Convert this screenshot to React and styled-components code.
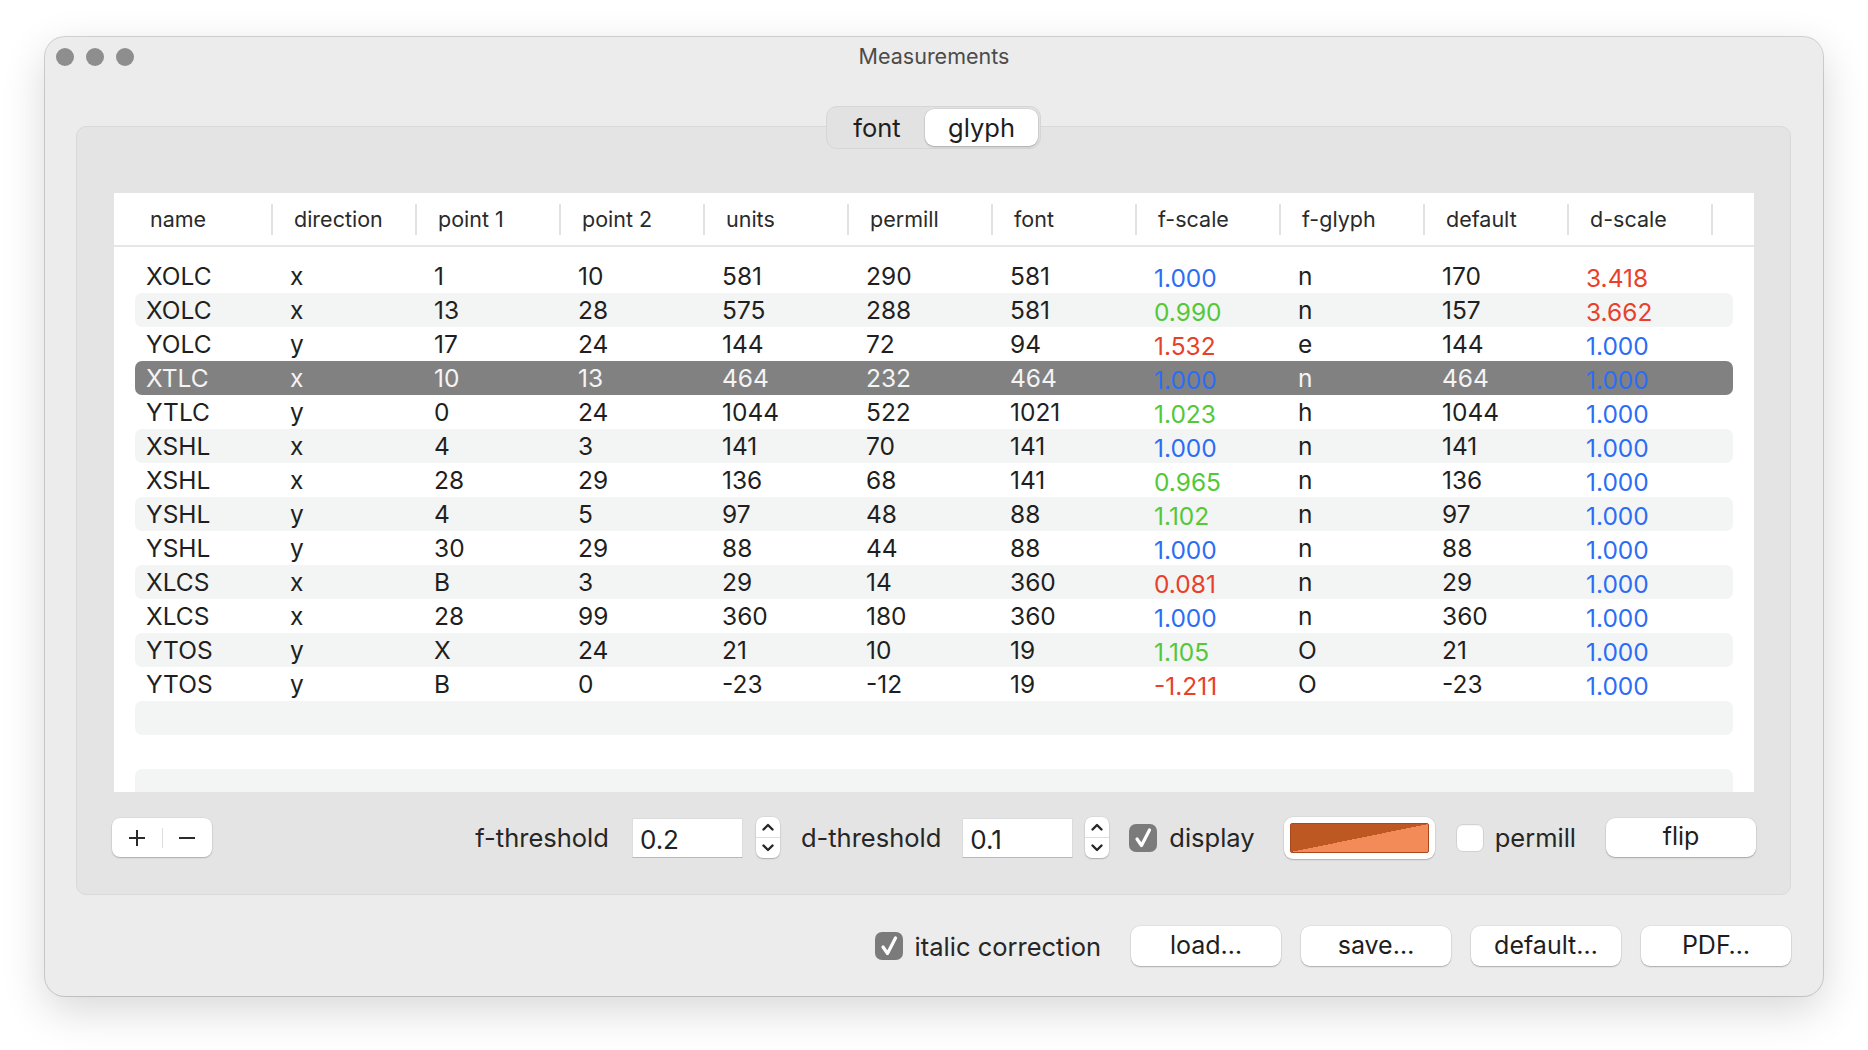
import React from "react";
import styled, { createGlobalStyle } from "styled-components";

const GlobalStyle = createGlobalStyle`
  html, body {
    margin: 0;
    padding: 0;
    background: #ffffff;
    min-height: 100vh;
  }
  body {
    font-family: Inter, "Noto Sans", sans-serif;
    color: #222222;
    -webkit-font-smoothing: antialiased;
  }
  #root {
    min-height: 100vh;
    padding: 37px 0 1px 45px;
    box-sizing: border-box;
  }
`;

const Window = styled.div`
  width: 1778px;
  height: 959px;
  box-sizing: border-box;
  background: #ececec;
  border-radius: 20px;
  box-shadow: 0 0 0 1px rgba(0, 0, 0, 0.16), 0 14px 44px rgba(0, 0, 0, 0.16);
  display: flex;
  flex-direction: column;
  overflow: hidden;
`;

const TitleBar = styled.div`
  height: 40px;
  display: grid;
  grid-template-columns: 1fr auto 1fr;
  align-items: start;
`;

const Lights = styled.div`
  display: flex;
  gap: 12px;
  padding: 11px 0 0 11px;
`;

const Light = styled.span`
  width: 18px;
  height: 18px;
  border-radius: 50%;
  background: #8e8e8e;
`;

const Title = styled.div`
  padding-top: 6px;
  font-size: 21.5px;
  line-height: 26px;
  color: #4b4b4b;
`;

const Content = styled.div`
  padding: 29px 32px 0 31px;
  display: flex;
  flex-direction: column;
`;

const SegmentWrap = styled.div`
  display: flex;
  justify-content: center;
  margin-bottom: -23px;
  position: relative;
  z-index: 1;
`;

const Segmented = styled.div`
  display: flex;
  height: 43px;
  box-sizing: border-box;
  padding: 2px;
  background: #e2e2e2;
  border: 1px solid #d6d6d6;
  border-radius: 11px;
`;

const Segment = styled.div`
  width: ${(p) => p.$w}px;
  display: flex;
  align-items: center;
  justify-content: center;
  font-size: 25.5px;
  color: #1e1e1e;
  border-radius: 9px;
  background: ${(p) => (p.$active ? "#ffffff" : "transparent")};
  box-shadow: ${(p) =>
    p.$active ? "0 1px 2px rgba(0,0,0,0.22), 0 0 0 0.5px rgba(0,0,0,0.08)" : "none"};
`;

const GroupBox = styled.div`
  height: 769px;
  box-sizing: border-box;
  padding: 66px 36px 0 37px;
  background: #e4e4e4;
  border: 1px solid #d9d9d9;
  border-radius: 10px;
  display: flex;
  flex-direction: column;
`;

const Table = styled.div`
  height: 599px;
  background: #ffffff;
  overflow: hidden;
`;

const HeaderRow = styled.div`
  height: 52px;
  display: flex;
  padding-left: 15px;
  border-bottom: 2px solid #e6e6e6;
`;

const HeaderCell = styled.div`
  width: 144px;
  flex: none;
  box-sizing: border-box;
  padding-left: 21px;
  display: flex;
  align-items: center;
  justify-content: space-between;
  font-size: 21.5px;
  color: #2a2a2a;
`;

const HeaderSep = styled.span`
  width: 2px;
  height: 31px;
  background: #e2e2e2;
`;

const Rows = styled.div`
  padding: 12px 21px 0;
`;

const Row = styled.div`
  height: 34px;
  display: flex;
  align-items: center;
  border-radius: 7px;
  background: ${(p) => (p.$selected ? "#818181" : p.$striped ? "#f3f4f4" : "transparent")};
  color: ${(p) => (p.$selected ? "#f4f4f4" : "#1f1f1f")};
`;

const tones = {
  b: "#2d6df5",
  g: "#53c839",
  r: "#e9402a",
};

const Cell = styled.div`
  width: 144px;
  flex: none;
  box-sizing: border-box;
  padding-left: 11px;
  padding-top: ${(p) => (p.$tone ? 4 : 0)}px;
  font-size: 24.5px;
  color: ${(p) => (p.$tone ? tones[p.$tone] : "inherit")};
`;

const ControlRow = styled.div`
  margin-top: 25px;
  height: 41px;
  display: flex;
  align-items: center;
`;

const PlusMinus = styled.div`
  margin-left: -2px;
  width: 100px;
  height: 39px;
  display: flex;
  align-items: center;
  background: #ffffff;
  border-radius: 8px;
  box-shadow: 0 1px 1.5px rgba(0, 0, 0, 0.22), 0 0 0 0.5px rgba(0, 0, 0, 0.08);
`;

const PMButton = styled.div`
  flex: 1;
  display: flex;
  align-items: center;
  justify-content: center;
  color: #2a2a2a;
`;

const PMDivider = styled.span`
  width: 1px;
  height: 20px;
  background: #dddddd;
`;

const Label = styled.span`
  margin-left: ${(p) => (p.$auto ? "auto" : `${p.$ml || 0}px`)};
  font-size: ${(p) => p.$size || 25.5}px;
  color: #262626;
  white-space: nowrap;
`;

const NumberInput = styled.div`
  margin-left: ${(p) => p.$ml}px;
  width: 111px;
  height: 40px;
  box-sizing: border-box;
  padding: 4px 0 0 7px;
  display: flex;
  align-items: center;
  background: #ffffff;
  border: 1px solid #dcdcdc;
  border-bottom-color: #b9b9b9;
  font-size: 26px;
  color: #222222;
`;

const Stepper = styled.div`
  margin-left: ${(p) => p.$ml}px;
  width: 24px;
  height: 41px;
  display: flex;
  flex-direction: column;
  background: #ffffff;
  border-radius: 7px;
  box-shadow: 0 1px 1.5px rgba(0, 0, 0, 0.22), 0 0 0 0.5px rgba(0, 0, 0, 0.08);
`;

const StepHalf = styled.div`
  flex: 1;
  display: flex;
  align-items: center;
  justify-content: center;
  border-top: ${(p) => (p.$lower ? "1px solid #dedede" : "none")};
`;

const CheckBox = styled.span`
  margin-left: ${(p) => p.$ml}px;
  width: 28px;
  height: 28px;
  flex: none;
  box-sizing: border-box;
  border-radius: 7px;
  display: flex;
  align-items: center;
  justify-content: center;
  background: ${(p) => (p.$checked ? "#7b7b7b" : "#ffffff")};
  border: ${(p) => (p.$checked ? "none" : "1px solid #d2d2d2")};
  box-shadow: ${(p) => (p.$checked ? "none" : "inset 0 1px 1px rgba(0,0,0,0.04)")};
`;

const ColorWell = styled.div`
  margin-left: ${(p) => p.$ml}px;
  width: 151px;
  height: 42px;
  box-sizing: border-box;
  padding: 6px 6px;
  background: #ffffff;
  border-radius: 9px;
  box-shadow: 0 1px 1.5px rgba(0, 0, 0, 0.2), 0 0 0 0.5px rgba(0, 0, 0, 0.08);
  display: flex;
`;

const Swatch = styled.div`
  flex: 1;
  border: 1px solid #a9491c;
  border-radius: 2px;
  background: linear-gradient(to bottom right, #bd5823 50%, #f28b58 50%);
`;

const PushButton = styled.div`
  margin-left: ${(p) => p.$ml}px;
  margin-right: ${(p) => p.$mr || 0}px;
  width: ${(p) => p.$w || 150}px;
  height: ${(p) => p.$h || 40}px;
  flex: none;
  display: flex;
  align-items: center;
  justify-content: center;
  padding-bottom: 3px;
  box-sizing: border-box;
  background: #ffffff;
  border-radius: 9px;
  box-shadow: 0 1px 1.5px rgba(0, 0, 0, 0.24), 0 0 0 0.5px rgba(0, 0, 0, 0.08);
  font-size: 25px;
  color: #1e1e1e;
`;

const BottomRow = styled.div`
  margin-top: 31px;
  height: 40px;
  display: flex;
  align-items: center;
  justify-content: flex-end;
`;

const columns = [
  "name",
  "direction",
  "point 1",
  "point 2",
  "units",
  "permill",
  "font",
  "f-scale",
  "f-glyph",
  "default",
  "d-scale",
];

// f-scale / d-scale keep a colour code: b = exact, g = in range, r = out of range
const rows = [
  ["XOLC", "x", "1", "10", "581", "290", "581", ["1.000", "b"], "n", "170", ["3.418", "r"]],
  ["XOLC", "x", "13", "28", "575", "288", "581", ["0.990", "g"], "n", "157", ["3.662", "r"]],
  ["YOLC", "y", "17", "24", "144", "72", "94", ["1.532", "r"], "e", "144", ["1.000", "b"]],
  ["XTLC", "x", "10", "13", "464", "232", "464", ["1.000", "b"], "n", "464", ["1.000", "b"]],
  ["YTLC", "y", "0", "24", "1044", "522", "1021", ["1.023", "g"], "h", "1044", ["1.000", "b"]],
  ["XSHL", "x", "4", "3", "141", "70", "141", ["1.000", "b"], "n", "141", ["1.000", "b"]],
  ["XSHL", "x", "28", "29", "136", "68", "141", ["0.965", "g"], "n", "136", ["1.000", "b"]],
  ["YSHL", "y", "4", "5", "97", "48", "88", ["1.102", "g"], "n", "97", ["1.000", "b"]],
  ["YSHL", "y", "30", "29", "88", "44", "88", ["1.000", "b"], "n", "88", ["1.000", "b"]],
  ["XLCS", "x", "B", "3", "29", "14", "360", ["0.081", "r"], "n", "29", ["1.000", "b"]],
  ["XLCS", "x", "28", "99", "360", "180", "360", ["1.000", "b"], "n", "360", ["1.000", "b"]],
  ["YTOS", "y", "X", "24", "21", "10", "19", ["1.105", "g"], "O", "21", ["1.000", "b"]],
  ["YTOS", "y", "B", "0", "-23", "-12", "19", ["-1.211", "r"], "O", "-23", ["1.000", "b"]],
];

const SELECTED = 3;
const EMPTY_ROWS = 3;

function Check() {
  return (
    <svg width="18" height="22" viewBox="0 0 18 22">
      <path d="M3 12l4.5 6.5L15.5 3" fill="none" stroke="#ffffff" strokeWidth="3.2" strokeLinecap="round" strokeLinejoin="round" />
    </svg>
  );
}

function Chevron({ up }) {
  return (
    <svg width="14" height="10" viewBox="0 0 14 10">
      <path
        d={up ? "M2.5 7.5L7 3l4.5 4.5" : "M2.5 2.5L7 7l4.5-4.5"}
        fill="none"
        stroke="#262626"
        strokeWidth="2.4"
        strokeLinecap="round"
        strokeLinejoin="round"
      />
    </svg>
  );
}

function NumberStepper({ ml }) {
  return (
    <Stepper $ml={ml}>
      <StepHalf>
        <Chevron up />
      </StepHalf>
      <StepHalf $lower>
        <Chevron />
      </StepHalf>
    </Stepper>
  );
}

function DataRow({ row, index }) {
  return (
    <Row $striped={index % 2 === 1} $selected={index === SELECTED}>
      {row.map((value, i) =>
        Array.isArray(value) ? (
          <Cell key={i} $tone={value[1]}>
            {value[0]}
          </Cell>
        ) : (
          <Cell key={i}>{value}</Cell>
        )
      )}
    </Row>
  );
}

export default function App() {
  return (
    <>
      <GlobalStyle />
      <Window>
        <TitleBar>
          <Lights>
            <Light />
            <Light />
            <Light />
          </Lights>
          <Title>Measurements</Title>
          <div />
        </TitleBar>

        <Content>
          <SegmentWrap>
            <Segmented>
              <Segment $w={96}>font</Segment>
              <Segment $w={113} $active>
                glyph
              </Segment>
            </Segmented>
          </SegmentWrap>

          <GroupBox>
            <Table>
              <HeaderRow>
                {columns.map((c) => (
                  <HeaderCell key={c}>
                    {c}
                    <HeaderSep />
                  </HeaderCell>
                ))}
              </HeaderRow>
              <Rows>
                {rows.map((r, i) => (
                  <DataRow key={i} row={r} index={i} />
                ))}
                {Array.from({ length: EMPTY_ROWS }).map((_, i) => (
                  <Row key={`e${i}`} $striped={(rows.length + i) % 2 === 1} />
                ))}
              </Rows>
            </Table>

            <ControlRow>
              <PlusMinus>
                <PMButton>
                  <svg width="20" height="20" viewBox="0 0 20 20">
                    <path d="M10 2v16M2 10h16" stroke="#2a2a2a" strokeWidth="2" />
                  </svg>
                </PMButton>
                <PMDivider />
                <PMButton>
                  <svg width="20" height="20" viewBox="0 0 20 20">
                    <path d="M2 10h16" stroke="#2a2a2a" strokeWidth="2" />
                  </svg>
                </PMButton>
              </PlusMinus>

              <Label $auto>f-threshold</Label>
              <NumberInput $ml={23}>0.2</NumberInput>
              <NumberStepper ml={13} />
              <Label $ml={21}>d-threshold</Label>
              <NumberInput $ml={21}>0.1</NumberInput>
              <NumberStepper ml={12} />
              <CheckBox $ml={20} $checked>
                <Check />
              </CheckBox>
              <Label $ml={12}>display</Label>
              <ColorWell $ml={29}>
                <Swatch />
              </ColorWell>
              <CheckBox $ml={21} />
              <Label $ml={11}>permill</Label>
              <PushButton $ml={30} $mr={-2} $h={39}>
                flip
              </PushButton>
            </ControlRow>
          </GroupBox>

          <BottomRow>
            <CheckBox $ml={0} $checked>
              <Check />
            </CheckBox>
            <Label $ml={12}>italic correction</Label>
            <PushButton $ml={30}>load…</PushButton>
            <PushButton $ml={20}>save…</PushButton>
            <PushButton $ml={20}>default…</PushButton>
            <PushButton $ml={20}>PDF…</PushButton>
          </BottomRow>
        </Content>
      </Window>
    </>
  );
}
